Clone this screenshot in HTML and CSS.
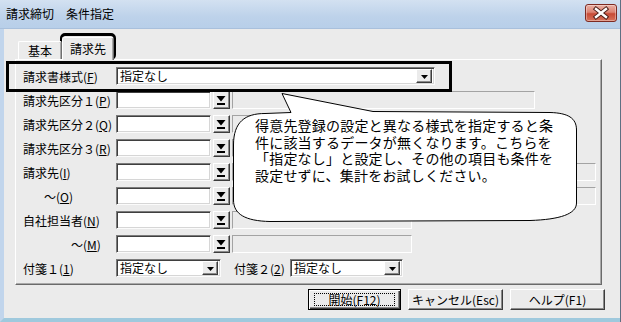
FILE: index.html
```html
<!DOCTYPE html>
<html lang="ja">
<head>
	<meta charset="UTF-8">
	<title>請求締切　条件指定</title>
	<link rel="stylesheet" href="styles.css">
</head>
<body>
	<div class="window">
		<div class="titlebar">
			<span class="title">請求締切　条件指定</span>
			<div class="close">
				<svg width="30" height="16" viewBox="0 0 30 16">
					<path d="M10 4L20 12M20 4L10 12" stroke="#4a1d18" stroke-width="4.4" stroke-linecap="square"/>
					<path d="M10 4L20 12M20 4L10 12" stroke="#fff" stroke-width="2.4" stroke-linecap="square"/>
				</svg>
			</div>
		</div>
		<div class="client">
			<div class="tabs">
				<div class="tab">基本</div>
				<div class="tab active">請求先</div>
			</div>
			<div class="panel">
				<div class="row">
					<label class="lbl">請求書様式(<u>F</u>)</label>
					<div class="combo wide"><span>指定なし</span><i class="cbtn"><svg width="7" height="4" viewBox="0 0 7 4"><path d="M0 0h7L3.5 4z"/></svg></i></div>
				</div>
				<div class="row">
					<label class="lbl">請求先区分１(<u>P</u>)</label>
					<div class="text"></div>
					<div class="pick"><svg width="10" height="11" viewBox="0 0 10 11"><path d="M0.5 1H9.5L5 6.5z"/><rect x="1" y="8" width="8" height="2"/></svg></div>
					<div class="off mid"></div>
				</div>
				<div class="row">
					<label class="lbl">請求先区分２(<u>Q</u>)</label>
					<div class="text"></div>
					<div class="pick"><svg width="10" height="11" viewBox="0 0 10 11"><path d="M0.5 1H9.5L5 6.5z"/><rect x="1" y="8" width="8" height="2"/></svg></div>
					<div class="off mid"></div>
				</div>
				<div class="row">
					<label class="lbl">請求先区分３(<u>R</u>)</label>
					<div class="text"></div>
					<div class="pick"><svg width="10" height="11" viewBox="0 0 10 11"><path d="M0.5 1H9.5L5 6.5z"/><rect x="1" y="8" width="8" height="2"/></svg></div>
					<div class="off mid"></div>
				</div>
				<div class="row">
					<label class="lbl">請求先(<u>I</u>)</label>
					<div class="text"></div>
					<div class="pick"><svg width="10" height="11" viewBox="0 0 10 11"><path d="M0.5 1H9.5L5 6.5z"/><rect x="1" y="8" width="8" height="2"/></svg></div>
					<div class="off long"></div>
				</div>
				<div class="row">
					<label class="lbl to-o">～(<u>O</u>)</label>
					<div class="text"></div>
					<div class="pick"><svg width="10" height="11" viewBox="0 0 10 11"><path d="M0.5 1H9.5L5 6.5z"/><rect x="1" y="8" width="8" height="2"/></svg></div>
					<div class="off long"></div>
				</div>
				<div class="row">
					<label class="lbl">自社担当者(<u>N</u>)</label>
					<div class="text"></div>
					<div class="pick"><svg width="10" height="11" viewBox="0 0 10 11"><path d="M0.5 1H9.5L5 6.5z"/><rect x="1" y="8" width="8" height="2"/></svg></div>
					<div class="off short"></div>
				</div>
				<div class="row">
					<label class="lbl to-m">～(<u>M</u>)</label>
					<div class="text"></div>
					<div class="pick"><svg width="10" height="11" viewBox="0 0 10 11"><path d="M0.5 1H9.5L5 6.5z"/><rect x="1" y="8" width="8" height="2"/></svg></div>
					<div class="off short"></div>
				</div>
				<div class="row">
					<label class="lbl">付箋１(<u>1</u>)</label>
					<div class="combo tag1"><span>指定なし</span><i class="cbtn"><svg width="7" height="4" viewBox="0 0 7 4"><path d="M0 0h7L3.5 4z"/></svg></i></div>
					<label class="lbl2">付箋２(<u>2</u>)</label>
					<div class="combo tag2"><span>指定なし</span><i class="cbtn"><svg width="7" height="4" viewBox="0 0 7 4"><path d="M0 0h7L3.5 4z"/></svg></i></div>
				</div>
			</div>
			<div class="buttons">
				<div class="btn default"><span>開始(F12)</span></div>
				<div class="btn">キャンセル(Esc)</div>
				<div class="btn">ヘルプ(F1)</div>
			</div>
		</div>

		<!-- 注記: 枠と吹き出し -->
		<div class="mark mark-tab"></div>
		<div class="mark mark-row"></div>
		<svg class="bubble" width="621" height="322" viewBox="0 0 621 322">
			<path d="M233.5 145C233.5 122 245 113.5 265 113.5L291 112.5L282 93.5L373 111.5L550 112.5C568 113 576.5 118 576.5 130L576.5 203C576.5 214 560 219.5 530 220.5L270 221.5C245 221 233.5 214 233.5 200Z" fill="#fff" stroke="#000" stroke-width="1"/>
		</svg>
		<div class="bubble-text">得意先登録の設定と異なる様式を指定すると条<br>件に該当するデータが無くなります。こちらを<br>「指定なし」と設定し、その他の項目も条件を<br>設定せずに、集計をお試しください。</div>
	</div>
</body>
</html>
```

FILE: styles.css
```css
*{margin:0;padding:0;box-sizing:border-box;}
body{
	background:#fff;
	font-family:"Noto Sans CJK JP","Noto Sans CJK SC",sans-serif;
	font-size:12px;
	color:#000;
	overflow:hidden;
}
.window{
	position:relative;
	width:621px;
	height:322px;
	background:#ebebeb;
	border-right:1px solid #5f6f82;
	display:flex;
	flex-direction:column;
}
.titlebar{
	height:29px;
	flex:none;
	display:flex;
	align-items:center;
	justify-content:space-between;
	padding:0 3px 2px 6px;
	background:linear-gradient(#d3e1f1,#bdd2ea 60%,#b8cfe9);
	border-bottom:1px solid #a9c0dc;
}
.title{font-size:12px;letter-spacing:0;}
.close{
	width:32px;
	height:18px;
	border:1px solid #7d2a22;
	border-radius:3px;
	background:linear-gradient(#eab0a5,#dc8373 45%,#c74a36 55%,#d7735c);
	display:flex;
	align-items:center;
	justify-content:center;
	box-shadow:inset 0 0 0 1px rgba(255,255,255,.35);
}
.client{
	flex:1;
	display:flex;
	flex-direction:column;
	padding:4px 18px 0 11px;
	border-left:4px solid #c1d5ec;
	border-bottom:4px solid #9fc9dd;
}

/* タブ */
.tabs{
	height:26px;
	display:flex;
	align-items:flex-end;
	padding-left:3px;
	position:relative;
	z-index:1;
}
.tab{
	height:18px;
	width:44px;
	text-align:center;
	line-height:17px;
	border:1px solid #fff;
	border-right-color:#6f6f6f;
	border-bottom:none;
	border-radius:2px 2px 0 0;
	box-shadow:inset -1px 0 0 #a8a8a8;
	background:#ebebeb;
}
.tab.active{
	height:23px;
	width:52px;
	line-height:21px;
	margin-bottom:-1px;
	padding-bottom:1px;
}
.panel{
	height:226px;
	padding:7px 0 0 7px;
	border:1px solid #fff;
	border-right-color:#6a6a6a;
	border-bottom-color:#6a6a6a;
	box-shadow:inset -1px -1px 0 #a9a9a9;
}
.row{
	height:18px;
	margin-bottom:6px;
	display:flex;
	align-items:center;
}
.lbl{width:93px;flex:none;white-space:nowrap;}
.lbl.to-o{padding-left:21px;}
.lbl.to-m{padding-left:48px;}
.lbl2{width:56px;margin-left:13px;white-space:nowrap;}
u{text-decoration:underline;text-underline-offset:1px;}

/* 入力欄 */
.text,.combo{
	height:18px;
	background:#fff;
	border:1px solid;
	border-color:#7b7b7b #fbfbfb #fbfbfb #7b7b7b;
	box-shadow:inset 1px 1px 0 #3f3f3f,inset -1px -1px 0 #d6d6d6;
}
.text{width:95px;}
.combo{
	display:flex;
	align-items:center;
	justify-content:space-between;
	padding:0 2px 0 3px;
}
.combo span{line-height:16px;}
.combo.wide{width:319px;}
.combo.tag1{width:105px;}
.combo.tag2{width:113px;}
.cbtn,.pick,.btn{
	background:#ebebeb;
	border:1px solid;
	border-color:#fff #3c3c3c #3c3c3c #fff;
	box-shadow:inset -1px -1px 0 #8a8a8a;
}
.cbtn{
	width:16px;
	height:14px;
	display:flex;
	align-items:center;
	justify-content:center;
	padding-top:1px;
}
.pick{
	width:17px;
	height:18px;
	margin-left:2px;
	display:flex;
	align-items:center;
	justify-content:center;
	padding:1px 1px 0 0;
}
.off{
	height:18px;
	margin-left:2px;
	border:1px solid;
	border-color:#a3a3a3 #fff #fff #a3a3a3;
}
.off.mid{width:303px;}
.off.long{width:364px;}
.off.short{width:180px;}

/* ボタン */
.buttons{
	display:flex;
	justify-content:flex-end;
	gap:7px;
	margin:4px -3px 0 0;
}
.btn{
	width:95px;
	height:21px;
	display:flex;
	align-items:center;
	justify-content:center;
	font-size:12px;
}
.btn.default{
	width:93px;
	border-color:#000;
	box-shadow:inset 1px 1px 0 #fff,inset -1px -1px 0 #3c3c3c,inset -2px -2px 0 #8a8a8a;
}
.btn.default span{
	border:1px dotted #000;
	width:81px;
	height:13px;
	line-height:11px;
	text-align:center;
}

/* 注記 */
.mark{
	position:absolute;
	border:3px solid #000;
	pointer-events:none;
}
.mark-tab{
	left:60px;
	top:33px;
	width:56px;
	height:27px;
	border-radius:5px;
}
.mark-row{
	left:6px;
	top:61px;
	width:446px;
	height:31px;
}
.bubble{
	position:absolute;
	left:0;
	top:0;
	pointer-events:none;
}
.bubble-text{
	position:absolute;
	left:255px;
	top:117px;
	font-size:14px;
	line-height:16.5px;
	white-space:nowrap;
	letter-spacing:0.2px;
}
```
